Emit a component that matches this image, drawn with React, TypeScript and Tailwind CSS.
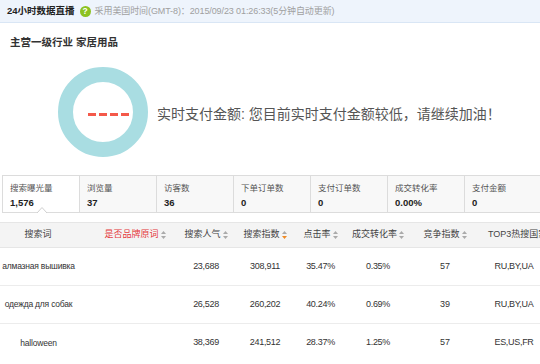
import React from "react";

const FONT = { fontFamily: '"Liberation Sans", "Noto Sans CJK SC", sans-serif' };

function Sort({ active = false }: { active?: boolean }) {
  return (
    <svg width="5" height="8" viewBox="0 0 5 8" className="ml-[2px] shrink-0">
      <polygon points="2.5,0 5,3 0,3" fill="#aaa" />
      <polygon points="0,5 5,5 2.5,8" fill={active ? "#f08a24" : "#aaa"} />
    </svg>
  );
}

const cols = "grid grid-cols-[86px_84px_65px_57px_57px_62px_68px_70px]";

const stats = [
  ["搜索曝光量", "1,576"],
  ["浏览量", "37"],
  ["访客数", "36"],
  ["下单订单数", "0"],
  ["支付订单数", "0"],
  ["成交转化率", "0.00%"],
  ["支付金额", "0"],
];

const rows = [
  ["алмазная вышивка", "23,688", "308,911", "35.47%", "0.35%", "57", "RU,BY,UA"],
  ["одежда для собак", "26,528", "260,202", "40.24%", "0.69%", "39", "RU,BY,UA"],
  ["halloween", "38,369", "241,512", "28.37%", "1.25%", "57", "ES,US,FR"],
];

export default function App() {
  return (
    <div className="w-[540px] h-[364px] overflow-hidden bg-white relative" style={FONT}>
      {/* top bar */}
      <div className="h-[23px] bg-[#eef4fc] border-b border-[#d9e6f5] flex items-center pl-[7px]">
        <span className="text-[9.5px] font-bold text-[#222] leading-none">24小时数据直播</span>
        <span className="ml-[5px] w-[11px] h-[11px] rounded-full bg-[#8cc220] text-white text-[8.5px] font-bold leading-none flex items-center justify-center">
          ?
        </span>
        <span className="ml-[4px] text-[9px] text-[#a0a0a0] leading-none whitespace-nowrap tracking-[-0.1px]">
          采用美国时间(GMT-8)：2015/09/23 01:26:33(5分钟自动更新)
        </span>
      </div>

      {/* title */}
      <div className="mt-[13px] pl-[10px] h-[14px] flex items-center text-[10.5px] font-bold text-[#333] whitespace-nowrap">
        主营一级行业 家居用品
      </div>

      {/* donut + message */}
      <div className="mt-[16px] flex items-center pl-[57px] h-[92px]">
        <svg width="92" height="92" viewBox="0 0 92 92" className="shrink-0">
          <circle cx="46" cy="46" r="37.5" fill="none" stroke="#a9dde2" strokeWidth="15" />
          <rect x="31" y="47" width="8" height="3" fill="#f4594a" />
          <rect x="42" y="47" width="8" height="3" fill="#f4594a" />
          <rect x="53" y="47" width="8" height="3" fill="#f4594a" />
          <rect x="64" y="47" width="8" height="3" fill="#f4594a" />
        </svg>
        <div className="ml-[8px] mt-[3px] text-[14px] text-[#555] whitespace-nowrap leading-none">
          实时支付金额: 您目前实时支付金额较低，请继续加油！
        </div>
      </div>

      {/* stats */}
      <div className="mt-[17px] ml-[2px] flex border border-[#dcdcdc] w-[540px] h-[38px] relative">
        {stats.map(([label, value], i) => (
          <div
            key={label}
            className={`w-[77px] shrink-0 pl-[7px] pt-[7px] ${i < 6 ? "border-r border-[#dcdcdc]" : ""} ${
              i === 0 ? "bg-white" : "bg-[#f8f8f8]"
            }`}
          >
            <div className="text-[8.5px] text-[#555] leading-[11px] whitespace-nowrap">{label}</div>
            <div className="text-[9.5px] font-bold text-[#222] leading-[13px] mt-[2px]">{value}</div>
          </div>
        ))}
        <svg width="10" height="6" viewBox="0 0 10 6" className="absolute left-[34px] bottom-[-1px]">
          <polygon points="0,6 5,0.5 10,6" fill="#fff" />
          <polyline points="0,6 5,0.5 10,6" fill="none" stroke="#cfcfcf" strokeWidth="1" />
        </svg>
      </div>

      {/* table header */}
      <div
        className={`${cols} mt-[9px] h-[26px] bg-[#f4f4f4] border-t border-b border-[#e6e6e6] items-center text-[9px] text-[#444] whitespace-nowrap`}
      >
        <div className="flex justify-center pr-[10px]">搜索词</div>
        <div className="flex justify-center items-center pl-[14px] text-[#e4393c]">
          是否品牌原词<Sort />
        </div>
        <div className="flex justify-center items-center pl-[7px]">
          搜索人气<Sort />
        </div>
        <div className="flex justify-center items-center pl-[3px]">
          搜索指数<Sort active />
        </div>
        <div className="flex justify-center items-center">
          点击率<Sort />
        </div>
        <div className="flex justify-center items-center pr-[4px]">
          成交转化率<Sort />
        </div>
        <div className="flex justify-center items-center">
          竞争指数<Sort />
        </div>
        <div className="flex justify-start items-center pl-[9px]">TOP3热搜国家</div>
      </div>

      {/* rows */}
      {rows.map((r, idx) => (
        <div
          key={idx}
          className={`${cols} h-[38px] items-center text-[9px] text-[#333] whitespace-nowrap ${
            idx < 2 ? "border-b border-[#ececec]" : ""
          }`}
        >
          <div className="flex justify-center pl-[1px] pr-[10px] text-[8.5px] tracking-[-0.2px]">{r[0]}</div>
          <div />
          <div className="flex justify-center pl-[7px] tracking-[-0.3px]">{r[1]}</div>
          <div className="flex justify-center pl-[3px] tracking-[-0.3px]">{r[2]}</div>
          <div className="flex justify-center tracking-[-0.3px]">{r[3]}</div>
          <div className="flex justify-center pr-[4px] tracking-[-0.3px]">{r[4]}</div>
          <div className="flex justify-center">{r[5]}</div>
          <div className="flex justify-center tracking-[-0.3px]">{r[6]}</div>
        </div>
      ))}
    </div>
  );
}
